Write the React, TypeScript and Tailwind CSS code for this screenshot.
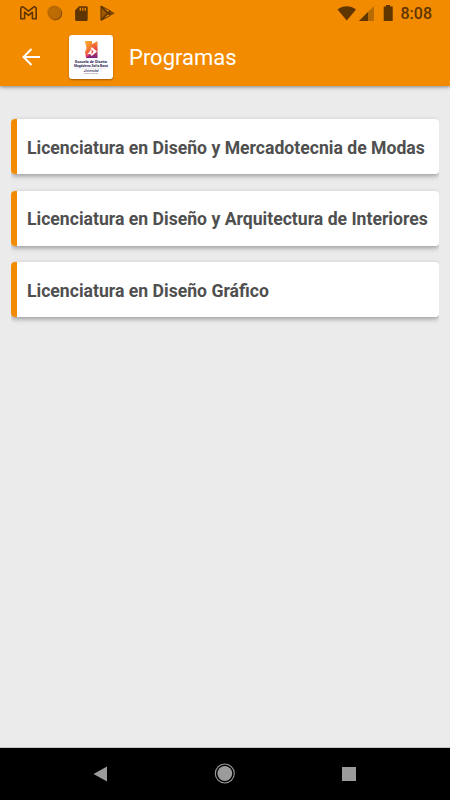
const programs = [
  "Licenciatura en Diseño y Mercadotecnia de Modas",
  "Licenciatura en Diseño y Arquitectura de Interiores",
  "Licenciatura en Diseño Gráfico",
];

function StatusBar() {
  return (
    <div className="flex h-[27px] items-center justify-between pl-5 pr-[18px] text-[#5f3500]">
      <svg width="100" height="27" viewBox="20 0 100 27" fill="none">
        <path
          d="M20.8 18.8V8.7c0-1.8 1.8-2.4 2.9-1.4l4.8 3.9 4.8-3.9c1.1-1 2.9-.4 2.9 1.4v10.1h-3.8v-6.600l-3.900 3.200-3.900-3.200v6.600z"
          stroke="currentColor"
          strokeWidth="1.6"
          strokeLinejoin="round"
        />
        <circle cx="55.3" cy="13.4" r="7" fill="#8a4e02" />
        <circle cx="54.3" cy="12.5" r="7" fill="#bd6c03" />
        <circle cx="54.3" cy="12.5" r="5.2" stroke="#a65f03" strokeWidth=".8" strokeDasharray="1 1" />
        <path
          d="M79.2 6.2h7c.9 0 1.5.6 1.5 1.5v11.8c0 .9-.6 1.5-1.5 1.5h-9.6c-.9 0-1.5-.6-1.5-1.5v-9.2z"
          fill="currentColor"
        />
        <path d="M80.3 7.800v2.900M82.800 7.800v2.900M85.300 7.800v2.900" stroke="#f38b00" strokeWidth="1.3" />
        <path d="M100.800 5.800v14.800l7-7.400z" fill="#9c5802" />
        <path d="m110.200 10.600 4.600 2.600-4.600 2.600-2.600-2.600z" fill="#7c4602" />
        <path d="M101.400 6.600 110 15.200M101.400 19.800 110 11.200" stroke="currentColor" strokeWidth="1.700" />
        <path d="m101 6 9.200 4.800M101 20.400l9.200-4.800M101 6v14.400" stroke="currentColor" strokeWidth="1" />
      </svg>
      <div className="flex items-center">
        <svg width="80" height="27" viewBox="335 0 80 27">
          <path d="M338.500 9.500C343.500 5 352 5 357 9.500L347.800 20.500z" fill="currentColor" />
          <path d="M375 6v15h-15z" fill="#b86a03" />
          <path d="M369 12v9h-9z" fill="currentColor" />
          <path d="M387 5h4.200v1.500h2.500V21h-9V6.500h2.300z" fill="currentColor" />
        </svg>
        <span className="-ml-[13px] mt-[1px] text-base font-medium leading-none">8:08</span>
      </div>
    </div>
  );
}

function SchoolLogo() {
  return (
    <div className="h-11 w-11 rounded-[3px] bg-white shadow-[0_1px_2px_rgba(0,0,0,0.35)]">
      <svg width="44" height="44" viewBox="0 0 44 44" fontFamily="Roboto, sans-serif">
        <defs>
          <linearGradient id="flame" x1="0" y1="0" x2="0.3" y2="1">
            <stop offset="0" stopColor="#fbb02c" />
            <stop offset="0.6" stopColor="#f4782f" />
            <stop offset="1" stopColor="#d4286c" />
          </linearGradient>
          <linearGradient id="page" x1="0" y1="0" x2="0" y2="1">
            <stop offset="0" stopColor="#f7902d" />
            <stop offset="0.5" stopColor="#e8483c" />
            <stop offset="1" stopColor="#7a2285" />
          </linearGradient>
        </defs>
        <path d="M16 6h7v17h-6l-.5-3.500-.5-2.500 1.500-3.500c.3-2-1.500-5-1.500-7.500z" fill="url(#flame)" />
        <path d="M22.500 9.500 28.500 6v17H17l5.500-5z" fill="url(#page)" />
        <path d="m22.800 12 5.200 4.400-5.400 4.600-1.600-2.200-3 .7 3-3.300z" fill="#fff" />
        <path d="m22.500 14 2 2.500-2 3.300z" fill="#f0564a" />
        <text x="6" y="28.300" fontSize="3.700" fontWeight="700" fill="#292653" textLength="32" lengthAdjust="spacingAndGlyphs">
          Escuela de Diseño
        </text>
        <text x="5" y="31.500" fontSize="3.100" fontWeight="700" fill="#292653" textLength="34" lengthAdjust="spacingAndGlyphs">
          Magdalena Sofía Barat
        </text>
        <path d="M6 33.300h32" stroke="#b8b6cf" strokeWidth=".3" />
        <text x="14.500" y="36.700" fontSize="2.700" fontWeight="500" fill="#292653" textLength="15" lengthAdjust="spacingAndGlyphs">
          ●Universidad
        </text>
        <text x="15" y="39" fontSize="2.200" fill="#77758f" textLength="14" lengthAdjust="spacingAndGlyphs">
          Santa Catarina
        </text>
      </svg>
    </div>
  );
}

function Header() {
  return (
    <header className="relative h-[86px] bg-[#f38b00] shadow-[0_1px_4px_rgba(0,0,0,0.45)]">
      <StatusBar />
      <div className="flex items-center pl-[22px] pt-2">
        <svg width="18" height="18" viewBox="0 0 18 18" fill="none" stroke="#fff" strokeWidth="2" className="mr-[29px]">
          <path d="M18 9H1.500M9.500 1 1.500 9l8 8" />
        </svg>
        <SchoolLogo />
        <h1 className="ml-4 mt-0.5 text-[22px] leading-none text-white">Programas</h1>
      </div>
    </header>
  );
}

function ProgramCard({ name }: { name: string }) {
  return (
    <li className="rounded shadow-[0_2px_5px_rgba(0,0,0,0.35)]">
      <div className="flex h-[55px] items-center overflow-hidden rounded bg-white">
        <span className="h-full w-1.5 bg-[#f38b00]" />
        <span className="ml-2.5 mt-[3px] whitespace-nowrap text-[17.62px] font-bold text-[#4f4f4f]">{name}</span>
      </div>
    </li>
  );
}

function NavigationBar() {
  return (
    <nav className="h-[52px] bg-black">
      <svg width="450" height="52" viewBox="0 0 450 52" fill="#9b9b9b">
        <path d="M93.500 26 107 18.500v15z" />
        <circle cx="224.800" cy="25.500" r="7.400" />
        <circle cx="224.800" cy="25.500" r="9.500" fill="none" stroke="#9b9b9b" strokeWidth="1.100" />
        <path d="M342 19h14v14h-14z" />
      </svg>
    </nav>
  );
}

export default function App() {
  return (
    <div className="flex h-[800px] w-[450px] flex-col overflow-hidden bg-[#ebebeb] font-['Roboto',sans-serif]">
      <Header />
      <main className="flex-1 px-[11px] pt-[33px]">
        <ul className="flex flex-col gap-[16.5px] overflow-x-clip">
          {programs.map((name) => (
            <ProgramCard key={name} name={name} />
          ))}
        </ul>
      </main>
      <div className="h-px bg-[#c4c4c4]" />
      <NavigationBar />
    </div>
  );
}
